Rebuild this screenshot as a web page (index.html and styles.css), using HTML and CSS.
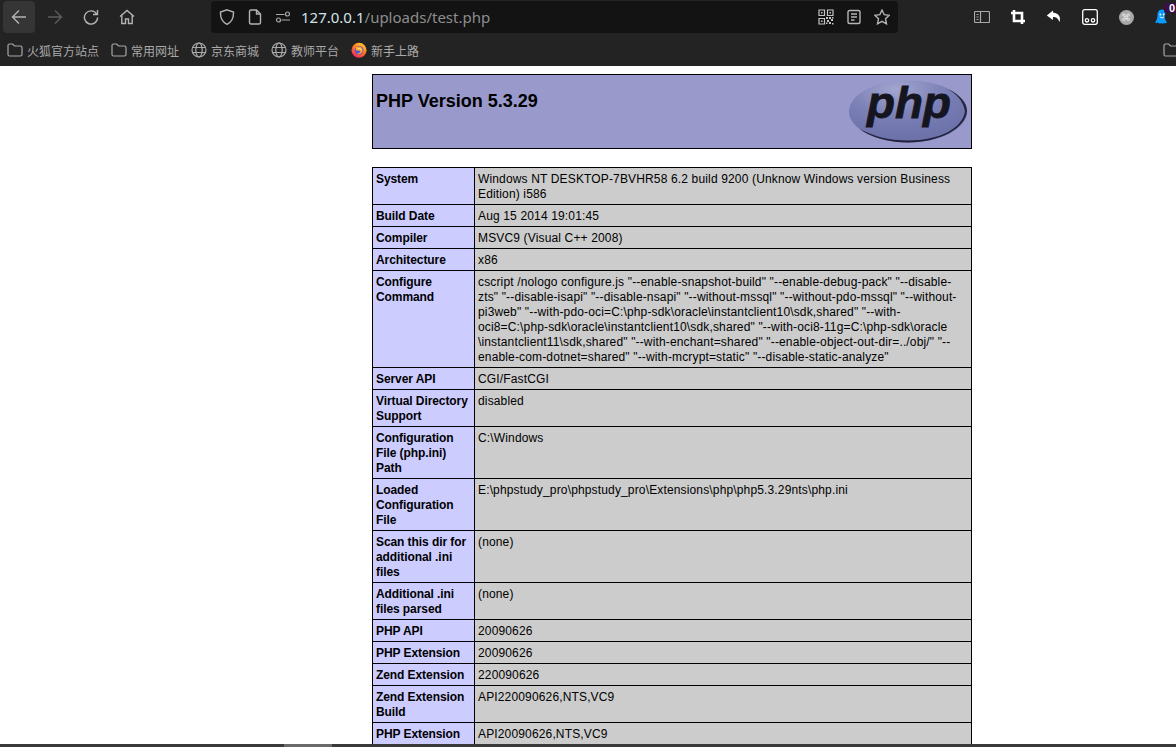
FILE: index.html
```html
<!DOCTYPE html>
<html lang="en">
<head>
    <meta charset="UTF-8">
    <title>phpinfo()</title>
    <link rel="stylesheet" href="styles.css">
</head>
<body>
    <div class="toolbar">
        <div class="btn btn-active">
            <svg class="icon" viewBox="0 0 16 16"><path d="M15 8H1.500M8 1.500 1.500 8 8 14.500"/></svg>
        </div>
        <div class="btn btn-off">
            <svg class="icon" viewBox="0 0 16 16"><path d="M1 8h13.500M8 1.500 14.500 8 8 14.500"/></svg>
        </div>
        <div class="btn">
            <svg class="icon" viewBox="0 0 16 16"><path d="M13.600 5A6.600 6.600 0 1 0 14.600 8.500M14.500 1v4.500H10"/></svg>
        </div>
        <div class="btn">
            <svg class="icon" viewBox="0 0 16 16"><path d="M1 7.500 8 1.500l7 6M2.800 6.500v8h3.700V10h3v4.500h3.700v-8"/></svg>
        </div>

        <div class="urlbar">
            <div class="url-btn">
                <svg class="icon" viewBox="0 0 16 16"><path d="M8 .8 14.500 3c.3 6-1.500 10-6.500 12.300C3 13 1.200 9 1.500 3Z"/></svg>
            </div>
            <div class="url-btn">
                <svg class="icon" viewBox="0 0 16 16"><path d="M2.500 2.500q0-1.500 1.500-1.500h5.500l4 4v8.500q0 1.500-1.500 1.500H4q-1.500 0-1.500-1.500ZM9.500 1v4h4"/></svg>
            </div>
            <div class="url-btn">
                <svg class="icon icon-thin" viewBox="0 0 16 16"><path d="M1 5.500h8.500M6.500 11H15"/><circle cx="12.500" cy="5" r="2"/><circle cx="3.500" cy="11" r="2"/></svg>
            </div>
            <div class="url-text"><span class="url-host">127.0.0.1</span>/uploads/test.php</div>
            <div class="url-btn">
                <svg class="icon icon-qr" viewBox="0 0 16 16">
                    <path d="M1 1h5.500v5.500H1ZM9.500 1H15v5.500H9.500ZM1 9.500h5.500V15H1Z"/>
                    <path class="qr-fill" d="M3 3h1.500v1.500H3ZM11.500 3H13v1.500h-1.500ZM3 11.500h1.500V13H3ZM8 8h2v2H8ZM11 8h2v2h-2ZM13 10h2v2h-2ZM9 11h2v2H9ZM11 13h2v2h-2ZM8 13.500h1.500V15H8ZM14 14h1.500v1.500H14ZM14 8h1.500v1.500H14Z"/>
                </svg>
            </div>
            <div class="url-btn">
                <svg class="icon" viewBox="0 0 16 16"><path d="M3.500 1.500h9q1.500 0 1.500 1.500v10q0 1.500-1.500 1.500h-9Q2 14.500 2 13V3q0-1.500 1.500-1.500ZM5 5h6M5 8h6M5 11h3.500"/></svg>
            </div>
            <div class="url-btn">
                <svg class="icon" viewBox="0 0 16 16"><path d="M8 1l2.200 4.700 5 .6-3.700 3.500 1 5L8 12.300 3.500 14.800l1-5L.8 6.300l5-.6Z"/></svg>
            </div>
        </div>

        <div class="btn">
            <svg class="icon icon-thin" viewBox="0 0 16 16"><path d="M1.500 2.500h13q1 0 1 1v9q0 1-1 1h-13q-1 0-1-1v-9q0-1 1-1ZM6.500 2.500v11M2.500 5.500h2M2.500 8h2M2.500 10.500h2"/></svg>
        </div>
        <div class="btn">
            <svg class="icon icon-white icon-bold" viewBox="0 0 16 16"><path d="M4 1v11h11M1 4h11v11"/></svg>
        </div>
        <div class="btn">
            <svg class="icon-solid" viewBox="0 0 16 16"><path d="M7 1.500.8 6.500 7 11V8c3 0 5 1 6.500 5 1.500-4 0-8.800-6.500-9.500Z"/></svg>
        </div>
        <div class="btn">
            <svg class="icon icon-white icon-box" viewBox="0 0 16 16"><rect x=".7" y=".7" width="14.600" height="14.600" rx="2"/><circle cx="5" cy="11.300" r="1.700"/><circle cx="11" cy="11.300" r="1.700"/></svg>
        </div>
        <div class="btn">
            <div class="ext-circle">⌘</div>
        </div>
        <div class="btn btn-badge">
            <svg class="icon-ghost" viewBox="0 0 16 16"><path d="M8 .5C4.500.5 3.500 3.500 3.500 6.500c0 3-1 5-2.500 7 1 .6 2 .6 3 0 .8 1.400 2 1.400 3 .4 1 1 2.200 1 3 0 1 .6 2 .6 3-.4-1.500-2-2.500-4-2.500-7C12.500 3.500 11.500.5 8 .5Z"/><circle class="ghost-eye" cx="6.300" cy="5.500" r=".9"/><circle class="ghost-eye" cx="9.700" cy="5.500" r=".9"/><path class="ghost-smile" d="M5.800 8q2.200 1.800 4.400 0"/></svg>
            <span class="badge">0</span>
        </div>
    </div>

    <div class="bookmarks">
        <div class="bookmark">
            <svg class="icon icon-thin" viewBox="0 0 16 16"><path d="M1 3.500q0-1.500 1.500-1.500h3.200l1.800 2h6q1.500 0 1.500 1.500v7q0 1.500-1.500 1.500h-11Q1 14 1 12.500Z"/></svg>
            <span>火狐官方站点</span>
        </div>
        <div class="bookmark">
            <svg class="icon icon-thin" viewBox="0 0 16 16"><path d="M1 3.500q0-1.500 1.500-1.500h3.200l1.800 2h6q1.500 0 1.500 1.500v7q0 1.500-1.500 1.500h-11Q1 14 1 12.500Z"/></svg>
            <span>常用网址</span>
        </div>
        <div class="bookmark">
            <svg class="icon icon-thin" viewBox="0 0 16 16"><circle cx="8" cy="8" r="7"/><ellipse cx="8" cy="8" rx="3.200" ry="7"/><path d="M1.500 5.500h13M1.500 10.500h13"/></svg>
            <span>京东商城</span>
        </div>
        <div class="bookmark">
            <svg class="icon icon-thin" viewBox="0 0 16 16"><circle cx="8" cy="8" r="7"/><ellipse cx="8" cy="8" rx="3.200" ry="7"/><path d="M1.500 5.500h13M1.500 10.500h13"/></svg>
            <span>教师平台</span>
        </div>
        <div class="bookmark">
            <svg class="icon-firefox" viewBox="0 0 16 16">
                <defs>
                    <linearGradient id="foxOuter" x1="0.800" y1="0" x2="0.200" y2="1">
                        <stop offset="0" stop-color="#ffd22e"/>
                        <stop offset="0.450" stop-color="#ff7a1f"/>
                        <stop offset="1" stop-color="#ef1f6b"/>
                    </linearGradient>
                </defs>
                <circle cx="8" cy="8.300" r="7.500" fill="url(#foxOuter)"/>
                <circle cx="8.200" cy="8.300" r="4.200" fill="#4f55d8"/>
                <path d="M4.500 5.500Q8 3.500 11 6 12.500 8.500 10.500 11 8.500 12.800 6 11.800 9 11.500 9.500 9.300 8 8 5.500 8.800 4.800 7 4.500 5.500Z" fill="#ffa52e"/>
                <path d="M6.500 6.800q2.500-.8 4 .8" fill="none" stroke="#fff3c8" stroke-width=".8"/>
            </svg>
            <span>新手上路</span>
        </div>
        <div class="bookmark bookmark-end">
            <svg class="icon icon-thin" viewBox="0 0 16 16"><path d="M1 3.500q0-1.500 1.500-1.500h3.200l1.800 2h6q1.500 0 1.500 1.500v7q0 1.500-1.500 1.500h-11Q1 14 1 12.500Z"/></svg>
        </div>
    </div>

    <div class="page">
        <table class="info info-head">
            <tr>
                <td class="h">
                    <svg class="php-logo" viewBox="0 0 120 67">
                        <defs>
                            <radialGradient id="logoFill" cx="0.400" cy="0.150" r="0.850">
                                <stop offset="0" stop-color="#a3a6cf"/>
                                <stop offset="0.500" stop-color="#7a7fb5"/>
                                <stop offset="1" stop-color="#6a70a8"/>
                            </radialGradient>
                        </defs>
                        <ellipse cx="60" cy="33.500" rx="59" ry="31" fill="url(#logoFill)"/>
                        <path d="M119 33C118 50 92 64.500 60 64.500 40 64.500 22 59 12 51 25 58 40 62.500 60 62.500 92 62.500 115 50 117 33 115 22 108 16 100 11 112 17 119 25 119 33Z" fill="#23233c"/>
                        <text class="logo-text" x="19" y="40" textLength="84" lengthAdjust="spacingAndGlyphs">php</text>
                    </svg>
                    <h1>PHP Version 5.3.29</h1>
                </td>
            </tr>
        </table>

        <table class="info">
            <colgroup><col class="col-key"><col></colgroup>
            <tr><td class="e">System</td><td class="v">Windows NT DESKTOP-7BVHR58 6.2 build 9200 (Unknow Windows version Business Edition) i586</td></tr>
            <tr><td class="e">Build Date</td><td class="v">Aug 15 2014 19:01:45</td></tr>
            <tr><td class="e">Compiler</td><td class="v">MSVC9 (Visual C++ 2008)</td></tr>
            <tr><td class="e">Architecture</td><td class="v">x86</td></tr>
            <tr><td class="e">Configure Command</td><td class="v">cscript /nologo configure.js "--enable-snapshot-build" "--enable-debug-pack" "--disable-zts" "--disable-isapi" "--disable-nsapi" "--without-mssql" "--without-pdo-mssql" "--without-pi3web" "--with-pdo-oci=C:\php-sdk\oracle\instantclient10\sdk,shared" "--with-oci8=C:\php-sdk\oracle\instantclient10\sdk,shared" "--with-oci8-11g=C:\php-sdk\oracle<br>\instantclient11\sdk,shared" "--with-enchant=shared" "--enable-object-out-dir=../obj/" "--enable-com-dotnet=shared" "--with-mcrypt=static" "--disable-static-analyze"</td></tr>
            <tr><td class="e">Server API</td><td class="v">CGI/FastCGI</td></tr>
            <tr><td class="e">Virtual Directory Support</td><td class="v">disabled</td></tr>
            <tr><td class="e">Configuration File (php.ini) Path</td><td class="v">C:\Windows</td></tr>
            <tr><td class="e">Loaded Configuration File</td><td class="v">E:\phpstudy_pro\phpstudy_pro\Extensions\php\php5.3.29nts\php.ini</td></tr>
            <tr><td class="e">Scan this dir for additional .ini files</td><td class="v">(none)</td></tr>
            <tr><td class="e">Additional .ini files parsed</td><td class="v">(none)</td></tr>
            <tr><td class="e">PHP API</td><td class="v">20090626</td></tr>
            <tr><td class="e">PHP Extension</td><td class="v">20090626</td></tr>
            <tr><td class="e">Zend Extension</td><td class="v">220090626</td></tr>
            <tr><td class="e">Zend Extension Build</td><td class="v">API220090626,NTS,VC9</td></tr>
            <tr><td class="e">PHP Extension Build</td><td class="v">API20090626,NTS,VC9</td></tr>
        </table>
    </div>

    <div class="scrollbar"><div class="scroll-thumb"></div></div>
</body>
</html>
```

FILE: styles.css
```css
* {
    margin: 0;
    padding: 0;
    box-sizing: border-box;
}

body {
    height: 100vh;
    display: flex;
    flex-direction: column;
    overflow: hidden;
    background: #fff;
    font-family: "Liberation Sans", Arial, sans-serif;
}

/* browser toolbar */
.toolbar {
    height: 34px;
    flex: none;
    display: flex;
    padding-left: 1px;
    background: #232323;
    overflow: hidden;
}

.btn {
    position: relative;
    width: 36px;
    height: 34px;
    flex: none;
    display: flex;
    align-items: center;
    justify-content: center;
}

.btn-active::before {
    content: "";
    position: absolute;
    left: 2px;
    top: 1px;
    width: 32px;
    height: 32px;
    border-radius: 4px;
    background: #353535;
}

.btn-off .icon {
    color: #5c5c5c;
}

.icon {
    position: relative;
    width: 16px;
    height: 16px;
    flex: none;
    fill: none;
    stroke: currentColor;
    stroke-width: 1.4;
    color: #b4b4b4;
}

.icon-thin {
    stroke-width: 1.2;
    color: #a8a8a8;
}

.icon-white {
    color: #fff;
}

.icon-bold {
    stroke-width: 2.6;
}

.icon-box {
    stroke-width: 1.3;
}

.icon-qr {
    stroke-width: 1.2;
    color: #c4c4c4;
}

.qr-fill {
    fill: currentColor;
    stroke: none;
}

.icon-solid {
    width: 16px;
    height: 16px;
    fill: #fff;
}

.ext-circle {
    width: 15px;
    height: 15px;
    border-radius: 50%;
    background: #a8a8a8;
    color: #e6e6e6;
    font-size: 10px;
    line-height: 15px;
    text-align: center;
}

.btn-badge {
    padding-bottom: 1px;
}

.icon-ghost {
    width: 16px;
    height: 16px;
    fill: #0a9dff;
}

.ghost-eye {
    fill: #fff;
}

.ghost-smile {
    fill: none;
    stroke: #fff;
    stroke-width: 0.9;
}

.badge {
    position: absolute;
    left: 20px;
    top: 3px;
    width: 16px;
    height: 10px;
    background: #3a0f45;
    border-radius: 2px;
    color: #fff;
    font-size: 11px;
    font-weight: bold;
    line-height: 10px;
    padding-left: 5px;
}

.urlbar {
    width: 687px;
    height: 32px;
    flex: none;
    display: flex;
    align-items: center;
    margin: 1px 66px 0;
    padding: 0 2px;
    background: #131313;
    border-radius: 4px;
}

.url-btn {
    width: 28px;
    height: 28px;
    flex: none;
    display: flex;
    align-items: center;
    justify-content: center;
}

.url-text {
    flex: 1;
    padding-left: 4px;
    color: #8d8d8d;
    font-family: "Noto Sans", sans-serif;
    font-size: 15px;
    white-space: nowrap;
}

.url-host {
    color: #cfe3ea;
}

/* bookmarks */
.bookmarks {
    height: 32px;
    flex: none;
    display: flex;
    align-items: center;
    gap: 12px;
    padding-left: 7px;
    background: #232323;
    overflow: hidden;
}

.bookmark {
    display: flex;
    align-items: center;
    gap: 4px;
    color: #a9a9a9;
    font-family: "Noto Sans CJK SC", sans-serif;
    font-size: 12px;
    white-space: nowrap;
}

.bookmark-end {
    margin-left: auto;
    margin-right: -3px;
}

.icon-firefox {
    width: 16px;
    height: 16px;
    flex: none;
}

/* phpinfo page */
.page {
    flex: 1;
    min-height: 0;
    overflow: hidden;
    padding: 8px 0 0 372px;
    color: #000;
    font-size: 12px;
    line-height: 15px;
}

.info {
    width: 600px;
    table-layout: fixed;
    border-collapse: collapse;
}

.info-head {
    margin-bottom: 18px;
}

.info td {
    border: 1px solid #000;
    padding: 4px 3px 2px;
    vertical-align: baseline;
}

.col-key {
    width: 102px;
}

.info .h {
    padding: 3px;
    background: #99c;
    vertical-align: top;
}

.h h1 {
    padding-top: 12px;
    font-size: 18px;
    line-height: 22px;
    font-weight: bold;
}

.php-logo {
    display: block;
    float: right;
    width: 120px;
    height: 67px;
}

.logo-text {
    font-family: "Liberation Sans", sans-serif;
    font-size: 45px;
    font-weight: bold;
    font-style: italic;
    fill: #15151f;
    stroke: #15151f;
    stroke-width: 0.8;
}

.e {
    background: #ccf;
    font-weight: bold;
    letter-spacing: -0.08px;
}

.v {
    background: #ccc;
    letter-spacing: 0.15px;
}

.scrollbar {
    height: 3px;
    flex: none;
    padding-left: 284px;
    background: #3a3a3a;
}

.scroll-thumb {
    width: 48px;
    height: 3px;
    background: #6a6a6a;
}
```
